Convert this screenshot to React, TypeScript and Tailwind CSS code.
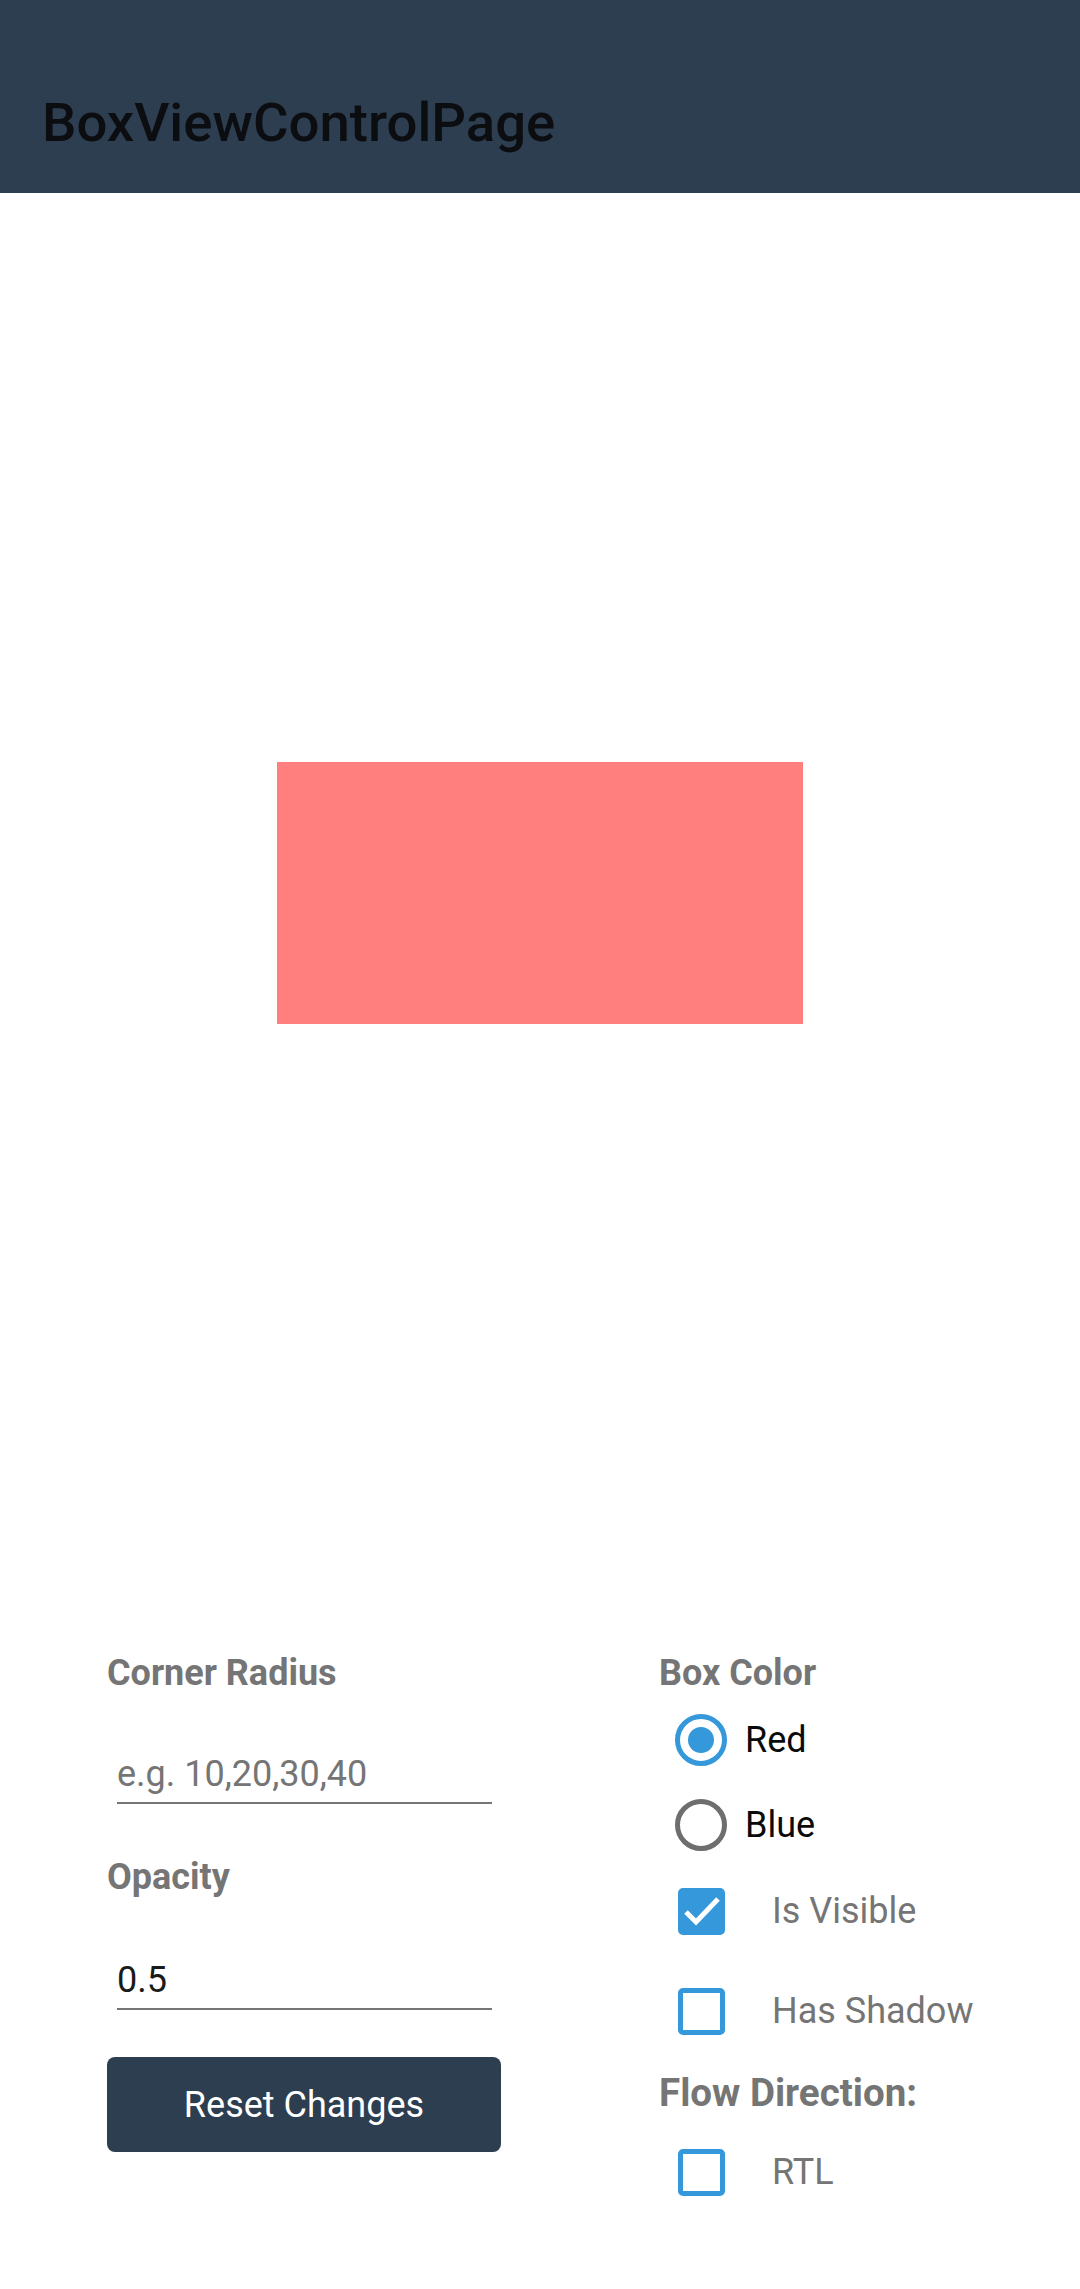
import React from "react";

function Radio({ checked, label }: { checked: boolean; label: string }) {
  return (
    <div className="flex items-center h-[52px]">
      <div
        className={
          "w-[52px] h-[52px] rounded-full border-[5px] flex items-center justify-center " +
          (checked ? "border-[#3498db]" : "border-[#6e6e6e]")
        }
      >
        {checked && <div className="w-[26px] h-[26px] rounded-full bg-[#3498db]" />}
      </div>
      <span className="ml-[18px] text-[36px] leading-[42px] text-[#0a0a0a]">{label}</span>
    </div>
  );
}

function Check({ checked, label }: { checked: boolean; label: string }) {
  return (
    <div className="flex items-center h-[48px]">
      <div className="ml-[19px] w-[47px] h-[47px]">
        {checked ? (
          <div className="w-[47px] h-[47px] rounded-[5px] bg-[#3498db]">
            <svg width="47" height="47" viewBox="0 0 47 47">
              <path d="M8 24 L18 34 L40 11" fill="none" stroke="#ffffff" strokeWidth="5" />
            </svg>
          </div>
        ) : (
          <div className="w-[47px] h-[47px] rounded-[5px] border-[5px] border-[#3498db]" />
        )}
      </div>
      <span className="ml-[47px] text-[36px] leading-[42px] text-[#757575]">{label}</span>
    </div>
  );
}

function Label({ children, big }: { children: React.ReactNode; big?: boolean }) {
  return (
    <div
      className={
        "leading-[42px] font-bold text-[#757575] h-[42px] " + (big ? "text-[38.5px]" : "text-[36px]")
      }
    >
      {children}
    </div>
  );
}

export default function App() {
  return (
    <div
      className="w-[1080px] h-[2289px] bg-white flex flex-col overflow-hidden"
      style={{ fontFamily: "Roboto, 'Noto Sans', sans-serif" }}
    >
      <header className="h-[193px] bg-[#2c3e50] pl-[42px] pt-[95px]">
        <div className="text-[54.5px] leading-[54px] font-medium text-[#0b0d10]">BoxViewControlPage</div>
      </header>
      <div className="h-[1400px] flex items-center justify-center">
        <div className="w-[526px] h-[262px] bg-[#ff7f7f]" />
      </div>
      <div className="flex pt-[59px]">
        <div className="ml-[107px] w-[395px] flex flex-col">
          <Label>Corner Radius</Label>
          <div className="mt-[59px] mx-[10px]">
            <div className="text-[36px] leading-[42px] text-[#757575]">e.g. 10,20,30,40</div>
            <div className="mt-[7px] h-[2px] bg-[#757575]" />
          </div>
          <div className="mt-[52px]">
            <Label>Opacity</Label>
          </div>
          <div className="mt-[61px] mx-[10px]">
            <div className="text-[36px] leading-[42px] text-[#1a1a1a]">0.5</div>
            <div className="mt-[7px] h-[2px] bg-[#757575]" />
          </div>
          <button className="mt-[47px] h-[95px] w-[394px] rounded-[8px] bg-[#2c3e50] text-white text-[36px] leading-[42px]">
            Reset Changes
          </button>
        </div>
        <div className="ml-[157px] flex flex-col">
          <Label>Box Color</Label>
          <div className="mt-[20px] ml-[16px]">
            <Radio checked label="Red" />
          </div>
          <div className="mt-[33px] ml-[16px]">
            <Radio checked={false} label="Blue" />
          </div>
          <div className="mt-[36px]">
            <Check checked label="Is Visible" />
          </div>
          <div className="mt-[52px]">
            <Check checked={false} label="Has Shadow" />
          </div>
          <div className="mt-[37px]">
            <Label big>Flow Direction:</Label>
          </div>
          <div className="mt-[34px]">
            <Check checked={false} label="RTL" />
          </div>
        </div>
      </div>
    </div>
  );
}
